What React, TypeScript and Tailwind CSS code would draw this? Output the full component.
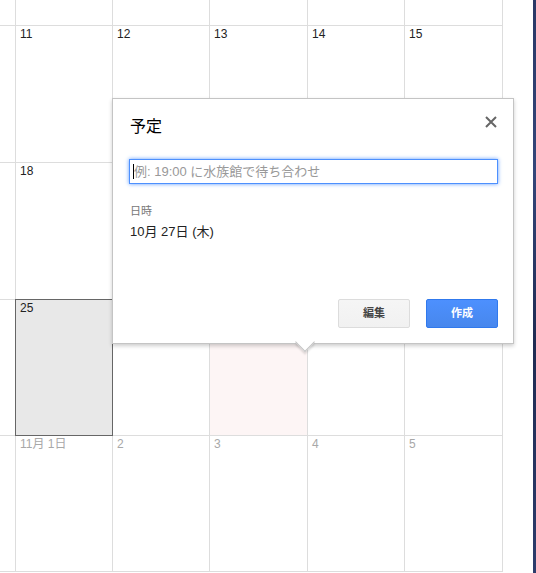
import React from "react";

type Cell = { label?: string; muted?: boolean; selected?: boolean; pink?: boolean };

const widths = ["w-[97px]", "w-[97px]", "w-[98px]", "w-[97px]", "w-[99px] border-r"];

const rows: { h: string; cells: Cell[] }[] = [
  { h: "h-[26px]", cells: [{}, {}, {}, {}, {}] },
  { h: "h-[137px]", cells: [{ label: "11" }, { label: "12" }, { label: "13" }, { label: "14" }, { label: "15" }] },
  { h: "h-[137px]", cells: [{ label: "18" }, {}, {}, {}, {}] },
  { h: "h-[136px]", cells: [{ label: "25", selected: true }, {}, { pink: true }, {}, {}] },
  { h: "h-[136px]", cells: [{ label: "11月 1日", muted: true }, { label: "2", muted: true }, { label: "3", muted: true }, { label: "4", muted: true }, { label: "5", muted: true }] },
];

export default function App() {
  return (
    <div className="relative w-[536px] h-[573px] overflow-hidden bg-white font-['Liberation_Sans','Noto_Sans_CJK_JP',sans-serif]">
      <div className="flex h-full">
        <div className="w-[533px] flex flex-col">
          {rows.map((r, ri) => (
            <div key={ri} className={`flex ${r.h}`}>
              <div className="w-[15px] border-b border-[#dddddd]" />
              {r.cells.map((c, ci) => (
                <div
                  key={ci}
                  className={`${widths[ci]} border-l border-b border-[#dddddd] px-[4px] pt-[1px] text-[12px] leading-[14px] ${
                    c.muted ? "text-[#a8a8a8]" : "text-[#222222]"
                  } ${
                    c.selected
                      ? "relative z-10 bg-[#e8e8e8] !border-[#666666] shadow-[0_-1px_0_#666666,1px_0_0_#666666,1px_-1px_0_#666666]"
                      : ""
                  } ${c.pink ? "bg-[#fdf5f5]" : ""}`}
                >
                  {c.label}
                </div>
              ))}
            </div>
          ))}
        </div>
        <div className="w-[3px] h-full bg-[linear-gradient(180deg,#2a3866,#34467a_30%,#1f2b52_60%,#2d3c6c)]" />
      </div>

      {/* Event bubble */}
      <div className="absolute z-20 left-[112px] top-[98px] w-[402px] h-[246px] bg-white border border-[#c4c4c4] shadow-[0_2px_4px_rgba(0,0,0,0.2)] flex flex-col pl-[16px] pr-[15px] pt-[17px] pb-[15px]">
        <div className="flex justify-between items-start h-[22px]">
          <div className="text-[16px] leading-[22px] text-black pl-[1px]">予定</div>
          <svg width="12" height="12" viewBox="0 0 12 12" className="mr-[1px]">
            <path d="M1 1 L11 11 M11 1 L1 11" stroke="#666666" strokeWidth="2" />
          </svg>
        </div>
        <div className="mt-[21px] h-[25px] border border-[#4d90fe] shadow-[0_0_4px_rgba(77,144,254,0.9)] flex items-center pl-[3px]">
          <span className="w-[1px] h-[15px] bg-black" />
          <span className="text-[13px] leading-[16px] text-[#999999]">例: 19:00 に水族館で待ち合わせ</span>
        </div>
        <div className="mt-[20px] pl-[1px] text-[11px] leading-[14px] text-[#777777]">日時</div>
        <div className="mt-[6px] pl-[1px] text-[13px] leading-[16px] text-[#222222]">10月 27日 (木)</div>
        <div className="mt-auto flex justify-end gap-[16px]">
          <button className="w-[72px] h-[29px] rounded-[2px] border border-[#dcdcdc] bg-[linear-gradient(#f5f5f5,#f1f1f1)] text-[11px] font-bold text-[#444444]">
            編集
          </button>
          <button className="w-[72px] h-[29px] rounded-[2px] border border-[#3079ed] bg-[linear-gradient(#4d90fe,#4787ed)] text-[11px] font-bold text-white">
            作成
          </button>
        </div>
        <div className="absolute left-[185px] top-[236px] w-[14px] h-[14px] rotate-45 bg-white border-r border-b border-[#c4c4c4] shadow-[2px_2px_2px_rgba(0,0,0,0.12)]" />
      </div>
    </div>
  );
}
